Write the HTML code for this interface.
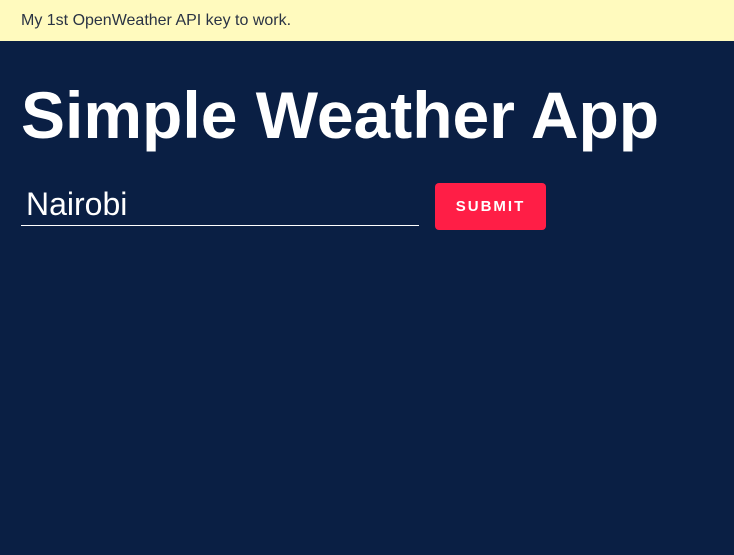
<!DOCTYPE html>
<html><head><meta charset="utf-8"><style>
html,body{margin:0;padding:0;width:734px;height:555px;overflow:hidden;background:#0a1f44;font-family:"Liberation Sans",Arial,sans-serif}
.banner{position:absolute;left:0;top:0;width:734px;height:41px;background:#fffabe;color:#2a3344;font-size:16px;line-height:41px;padding-left:21px;box-sizing:border-box}
h1{position:absolute;left:21px;top:77px;margin:0;color:#fff;font-size:66px;font-weight:bold;line-height:76px;white-space:nowrap}
.inp{position:absolute;left:21px;top:183px;width:398px;height:43px;border-bottom:1px solid #fff;color:#fff;font-size:32px;line-height:42px;padding-left:5px;box-sizing:border-box}
.btn{position:absolute;left:435px;top:183px;width:111px;height:47px;background:#ff1e46;border-radius:4px;color:#fff;font-weight:bold;font-size:15px;letter-spacing:2px;text-align:center;line-height:47px}
</style></head><body>
<div class="banner">My 1st OpenWeather API key to work.</div>
<h1>Simple Weather App</h1>
<div class="inp">Nairobi</div>
<div class="btn">SUBMIT</div>
</body></html>
